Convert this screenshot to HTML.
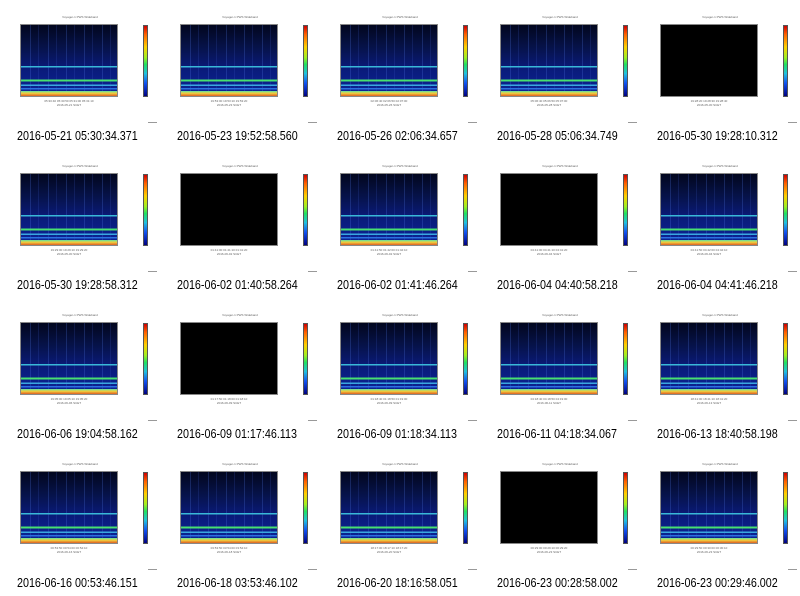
<!DOCTYPE html><html><head><style>
body{margin:0;width:800px;height:596px;background:#fff;position:relative;overflow:hidden;font-family:"Liberation Sans",sans-serif}
.c{position:absolute;width:160px;height:149px}
.t{position:absolute;left:40px;top:15px;width:80px;text-align:center;font-size:3px;color:#666}
.p{position:absolute;left:20px;top:24px;width:98px;height:73px;border:1px solid #888;box-sizing:border-box;
background:
linear-gradient(to bottom,transparent 58%,#39b8d8 58%,#39b8d8 60%,transparent 60%,transparent 77%,#48e070 77%,#48e070 79.5%,transparent 79.5%,transparent 84%,#3aa8e0 84%,#3aa8e0 86%,transparent 86%,transparent 89%,#2b70e0 89%,#2b70e0 91%,transparent 91%,transparent 93%,#5ee0a0 93%,#f0d040 96%,#e06020 100%),
repeating-linear-gradient(to right,transparent 0,transparent 9px,rgba(80,120,230,.25) 9px,rgba(80,120,230,.25) 10px,transparent 10px,transparent 17px,rgba(60,90,200,.2) 17px,rgba(60,90,200,.2) 18px),
linear-gradient(to bottom,#02061e 0%,#061247 30%,#0a1a78 60%,#0c2498 100%)}
.k{background:#000}
.cb{position:absolute;left:143px;top:25px;width:5px;height:72px;border:1px solid #555;box-sizing:border-box;background:linear-gradient(to bottom,#d00000,#ff6000 12%,#ffd000 30%,#a0f020 45%,#20e060 55%,#20c0e0 68%,#1050f0 82%,#000080)}
.ax{position:absolute;left:20px;top:99px;width:98px;height:10px;font-size:3px;color:#666;text-align:center;line-height:4px}
.d{position:absolute;left:148px;top:122px;width:9px;height:1px;background:#999}
.cap{position:absolute;left:17px;top:129px;font-size:12.5px;color:#000;white-space:nowrap;transform:scaleX(0.86);transform-origin:0 0}
</style></head><body>
<div class="c" style="left:0;top:0"><div class="t">Voyager-1 PWS Wideband</div><div class="p"></div><div class="cb"></div><div class="ax">05:30:40 05:30:50 05:31:00 05:31:10<br>2016-05-21 SCET</div><div class="d"></div><div class="cap">2016-05-21 05:30:34.371</div></div>
<div class="c" style="left:160px;top:0"><div class="t">Voyager-1 PWS Wideband</div><div class="p"></div><div class="cb"></div><div class="ax">19:53:00 19:53:10 19:53:20<br>2016-05-23 SCET</div><div class="d"></div><div class="cap">2016-05-23 19:52:58.560</div></div>
<div class="c" style="left:320px;top:0"><div class="t">Voyager-1 PWS Wideband</div><div class="p"></div><div class="cb"></div><div class="ax">02:06:40 02:06:50 02:07:00<br>2016-05-26 SCET</div><div class="d"></div><div class="cap">2016-05-26 02:06:34.657</div></div>
<div class="c" style="left:480px;top:0"><div class="t">Voyager-1 PWS Wideband</div><div class="p"></div><div class="cb"></div><div class="ax">05:06:40 05:06:50 05:07:00<br>2016-05-28 SCET</div><div class="d"></div><div class="cap">2016-05-28 05:06:34.749</div></div>
<div class="c" style="left:640px;top:0"><div class="t">Voyager-1 PWS Wideband</div><div class="p k"></div><div class="cb"></div><div class="ax">19:28:20 19:28:30 19:28:40<br>2016-05-30 SCET</div><div class="d"></div><div class="cap">2016-05-30 19:28:10.312</div></div>

<div class="c" style="left:0;top:149px"><div class="t">Voyager-1 PWS Wideband</div><div class="p"></div><div class="cb"></div><div class="ax">19:29:00 19:29:10 19:29:20<br>2016-05-30 SCET</div><div class="d"></div><div class="cap">2016-05-30 19:28:58.312</div></div>
<div class="c" style="left:160px;top:149px"><div class="t">Voyager-1 PWS Wideband</div><div class="p k"></div><div class="cb"></div><div class="ax">01:41:00 01:41:10 01:41:20<br>2016-06-02 SCET</div><div class="d"></div><div class="cap">2016-06-02 01:40:58.264</div></div>
<div class="c" style="left:320px;top:149px"><div class="t">Voyager-1 PWS Wideband</div><div class="p"></div><div class="cb"></div><div class="ax">01:41:50 01:42:00 01:42:10<br>2016-06-02 SCET</div><div class="d"></div><div class="cap">2016-06-02 01:41:46.264</div></div>
<div class="c" style="left:480px;top:149px"><div class="t">Voyager-1 PWS Wideband</div><div class="p k"></div><div class="cb"></div><div class="ax">04:41:00 04:41:10 04:41:20<br>2016-06-04 SCET</div><div class="d"></div><div class="cap">2016-06-04 04:40:58.218</div></div>
<div class="c" style="left:640px;top:149px"><div class="t">Voyager-1 PWS Wideband</div><div class="p"></div><div class="cb"></div><div class="ax">04:41:50 04:42:00 04:42:10<br>2016-06-04 SCET</div><div class="d"></div><div class="cap">2016-06-04 04:41:46.218</div></div>

<div class="c" style="left:0;top:298px"><div class="t">Voyager-1 PWS Wideband</div><div class="p"></div><div class="cb"></div><div class="ax">19:05:00 19:05:10 19:05:20<br>2016-06-06 SCET</div><div class="d"></div><div class="cap">2016-06-06 19:04:58.162</div></div>
<div class="c" style="left:160px;top:298px"><div class="t">Voyager-1 PWS Wideband</div><div class="p k"></div><div class="cb"></div><div class="ax">01:17:50 01:18:00 01:18:10<br>2016-06-09 SCET</div><div class="d"></div><div class="cap">2016-06-09 01:17:46.113</div></div>
<div class="c" style="left:320px;top:298px"><div class="t">Voyager-1 PWS Wideband</div><div class="p"></div><div class="cb"></div><div class="ax">01:18:40 01:18:50 01:19:00<br>2016-06-09 SCET</div><div class="d"></div><div class="cap">2016-06-09 01:18:34.113</div></div>
<div class="c" style="left:480px;top:298px"><div class="t">Voyager-1 PWS Wideband</div><div class="p"></div><div class="cb"></div><div class="ax">04:18:40 04:18:50 04:19:00<br>2016-06-11 SCET</div><div class="d"></div><div class="cap">2016-06-11 04:18:34.067</div></div>
<div class="c" style="left:640px;top:298px"><div class="t">Voyager-1 PWS Wideband</div><div class="p"></div><div class="cb"></div><div class="ax">18:41:00 18:41:10 18:41:20<br>2016-06-13 SCET</div><div class="d"></div><div class="cap">2016-06-13 18:40:58.198</div></div>

<div class="c" style="left:0;top:447px"><div class="t">Voyager-1 PWS Wideband</div><div class="p"></div><div class="cb"></div><div class="ax">00:53:50 00:54:00 00:54:10<br>2016-06-16 SCET</div><div class="d"></div><div class="cap">2016-06-16 00:53:46.151</div></div>
<div class="c" style="left:160px;top:447px"><div class="t">Voyager-1 PWS Wideband</div><div class="p"></div><div class="cb"></div><div class="ax">03:53:50 03:54:00 03:54:10<br>2016-06-18 SCET</div><div class="d"></div><div class="cap">2016-06-18 03:53:46.102</div></div>
<div class="c" style="left:320px;top:447px"><div class="t">Voyager-1 PWS Wideband</div><div class="p"></div><div class="cb"></div><div class="ax">18:17:00 18:17:10 18:17:20<br>2016-06-20 SCET</div><div class="d"></div><div class="cap">2016-06-20 18:16:58.051</div></div>
<div class="c" style="left:480px;top:447px"><div class="t">Voyager-1 PWS Wideband</div><div class="p k"></div><div class="cb"></div><div class="ax">00:29:00 00:29:10 00:29:20<br>2016-06-23 SCET</div><div class="d"></div><div class="cap">2016-06-23 00:28:58.002</div></div>
<div class="c" style="left:640px;top:447px"><div class="t">Voyager-1 PWS Wideband</div><div class="p"></div><div class="cb"></div><div class="ax">00:29:50 00:30:00 00:30:10<br>2016-06-23 SCET</div><div class="d"></div><div class="cap">2016-06-23 00:29:46.002</div></div>
</body></html>
